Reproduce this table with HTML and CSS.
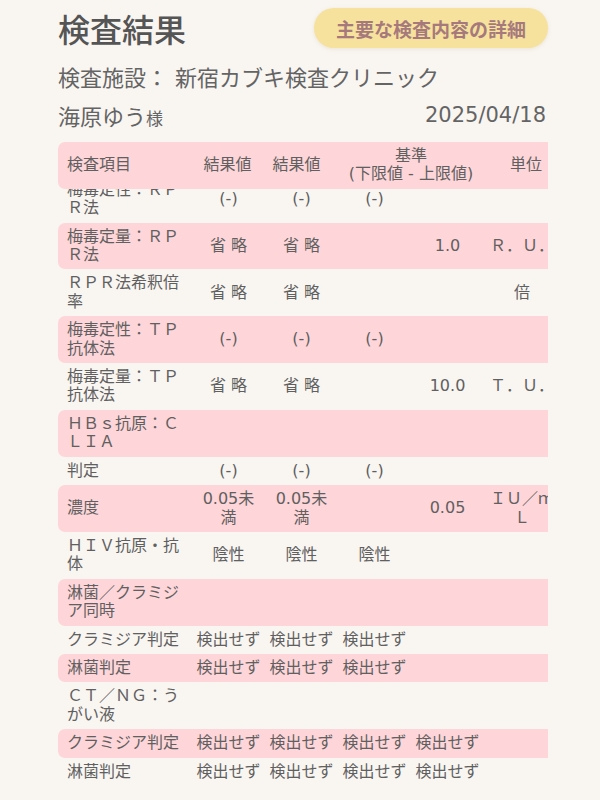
FILE: index.html
```html
<!DOCTYPE html>
<html lang="ja">
<head>
<meta charset="utf-8">
<title>検査結果</title>
<link rel="stylesheet" href="styles.css">
</head>
<body>
<div class="page">
  <div class="top">
    <h1 class="title">検査結果</h1>
    <button class="detail-btn">主要な検査内容の詳細</button>
  </div>
  <div class="facility">検査施設： 新宿カブキ検査クリニック</div>
  <div class="person">
    <span class="name">海原ゆう<span class="sama">様</span></span>
    <span class="date">2025/04/18</span>
  </div>
  <div class="table-wrap">
    <table class="grid head">
      <colgroup><col class="c1"><col class="cv"><col class="cv"><col class="cv"><col class="cv"><col class="c6"></colgroup>
      <tr class="pink">
        <th class="item">検査項目</th>
        <th class="h2">結果値</th>
        <th class="h3">結果値</th>
        <th colspan="2">基準<br>(下限値 - 上限値)</th>
        <th class="h6">単位</th>
      </tr>
    </table>
    <div class="scroll">
      <table class="grid body">
        <colgroup><col class="c1"><col class="cv"><col class="cv"><col class="cv"><col class="cv"><col class="c6"></colgroup>
        <tr><td class="item">梅毒定性：ＲＰＲ法</td><td>(-)</td><td>(-)</td><td>(-)</td><td></td><td></td></tr>
        <tr class="pink"><td class="item">梅毒定量：ＲＰＲ法</td><td>省 略</td><td>省 略</td><td></td><td>1.0</td><td>Ｒ．Ｕ．</td></tr>
        <tr><td class="item">ＲＰＲ法希釈倍率</td><td>省 略</td><td>省 略</td><td></td><td></td><td>倍</td></tr>
        <tr class="pink"><td class="item">梅毒定性：ＴＰ抗体法</td><td>(-)</td><td>(-)</td><td>(-)</td><td></td><td></td></tr>
        <tr><td class="item">梅毒定量：ＴＰ抗体法</td><td>省 略</td><td>省 略</td><td></td><td>10.0</td><td>Ｔ．Ｕ．</td></tr>
        <tr class="pink"><td class="item">ＨＢｓ抗原：ＣＬＩＡ</td><td></td><td></td><td></td><td></td><td></td></tr>
        <tr><td class="item">判定</td><td>(-)</td><td>(-)</td><td>(-)</td><td></td><td></td></tr>
        <tr class="pink"><td class="item">濃度</td><td>0.05未満</td><td>0.05未満</td><td></td><td>0.05</td><td>ＩＵ／ｍＬ</td></tr>
        <tr><td class="item">ＨＩＶ抗原・抗体</td><td>陰性</td><td>陰性</td><td>陰性</td><td></td><td></td></tr>
        <tr class="pink"><td class="item">淋菌／クラミジア同時</td><td></td><td></td><td></td><td></td><td></td></tr>
        <tr><td class="item">クラミジア判定</td><td>検出せず</td><td>検出せず</td><td>検出せず</td><td></td><td></td></tr>
        <tr class="pink"><td class="item">淋菌判定</td><td>検出せず</td><td>検出せず</td><td>検出せず</td><td></td><td></td></tr>
        <tr><td class="item">ＣＴ／ＮＧ：うがい液</td><td></td><td></td><td></td><td></td><td></td></tr>
        <tr class="pink"><td class="item">クラミジア判定</td><td>検出せず</td><td>検出せず</td><td>検出せず</td><td>検出せず</td><td></td></tr>
        <tr><td class="item">淋菌判定</td><td>検出せず</td><td>検出せず</td><td>検出せず</td><td>検出せず</td><td></td></tr>
      </table>
    </div>
  </div>
</div>
</body>
</html>
```
FILE: styles.css
```css
* { box-sizing: border-box; }
html, body {
  margin: 0;
  padding: 0;
  background: #f9f6f2;
}
body {
  font-family: "DejaVu Sans", "Noto Sans CJK JP", sans-serif;
  color: #606060;
  width: 600px;
  height: 800px;
  overflow: hidden;
}
.page {
  padding: 8px 52px 0 58px;
}
.top {
  display: flex;
  justify-content: space-between;
  align-items: center;
  height: 40px;
}
.title {
  margin: 0;
  font-family: "Noto Sans CJK JP", sans-serif;
  font-size: 32px;
  font-weight: 500;
  line-height: 40px;
  color: #555;
}
.detail-btn {
  border: none;
  height: 40px;
  padding: 0 22px;
  border-radius: 20px;
  background: #f6e29c;
  color: #a67a7c;
  font-family: "Noto Sans CJK JP", sans-serif;
  font-size: 19px;
  font-weight: 700;
  box-shadow: 0 1px 4px rgba(200, 170, 120, 0.25);
}
.facility {
  margin-top: 13px;
  font-size: 22px;
  line-height: 36px;
  color: #646464;
}
.person {
  display: flex;
  justify-content: space-between;
  align-items: center;
  height: 36px;
  color: #646464;
}
.name {
  font-size: 22px;
}
.sama {
  font-size: 17px;
}
.date {
  font-size: 21px;
  padding-right: 2px;
}
.table-wrap {
  margin-top: 9px;
  width: 490px;
  overflow: hidden;
}
.grid {
  border-collapse: separate;
  border-spacing: 0;
  table-layout: fixed;
  width: 502px;
  font-size: 16px;
  line-height: 18.4px;
}
.c1 { width: 134px; }
.cv { width: 73px; }
.c6 { width: 76px; }
.grid th, .grid td {
  padding: 5px 4px;
  text-align: center;
  vertical-align: middle;
  font-weight: 400;
  color: #606060;
}
.grid .item {
  text-align: left;
  padding-left: 9px;
}
.grid th.h2 { padding-right: 6px; }
.grid th.h3 { padding-right: 14px; }
.grid th.h6 { padding-left: 12px; }
.grid tr.pink th, .grid tr.pink td {
  background: #fed6d9;
}
.grid tr.pink > :first-child {
  border-radius: 7px 0 0 7px;
}
.grid tr.pink > :last-child {
  border-radius: 0 7px 7px 0;
}
.scroll {
  overflow: hidden;
  height: 620px;
}
.body {
  margin-top: -13px;
}
```
